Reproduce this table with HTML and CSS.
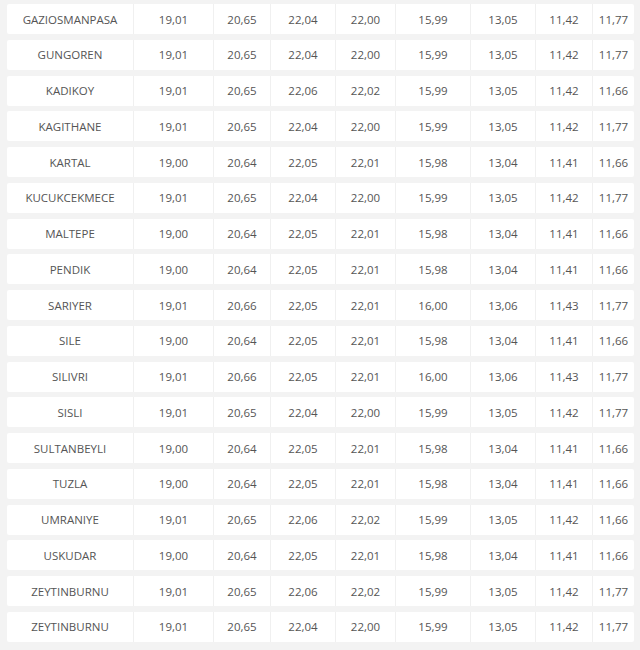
FILE: index.html
```html
<!DOCTYPE html>
<html>
<head>
<meta charset="utf-8">
<link rel="stylesheet" href="styles.css">
</head>
<body>
<div class="table">
<div class="row"><div class="c">GAZIOSMANPASA</div><div class="c">19,01</div><div class="c">20,65</div><div class="c">22,04</div><div class="c">22,00</div><div class="c">15,99</div><div class="c">13,05</div><div class="c">11,42</div><div class="c">11,77</div></div>
<div class="row"><div class="c">GUNGOREN</div><div class="c">19,01</div><div class="c">20,65</div><div class="c">22,04</div><div class="c">22,00</div><div class="c">15,99</div><div class="c">13,05</div><div class="c">11,42</div><div class="c">11,77</div></div>
<div class="row"><div class="c">KADIKOY</div><div class="c">19,01</div><div class="c">20,65</div><div class="c">22,06</div><div class="c">22,02</div><div class="c">15,99</div><div class="c">13,05</div><div class="c">11,42</div><div class="c">11,66</div></div>
<div class="row"><div class="c">KAGITHANE</div><div class="c">19,01</div><div class="c">20,65</div><div class="c">22,04</div><div class="c">22,00</div><div class="c">15,99</div><div class="c">13,05</div><div class="c">11,42</div><div class="c">11,77</div></div>
<div class="row"><div class="c">KARTAL</div><div class="c">19,00</div><div class="c">20,64</div><div class="c">22,05</div><div class="c">22,01</div><div class="c">15,98</div><div class="c">13,04</div><div class="c">11,41</div><div class="c">11,66</div></div>
<div class="row"><div class="c">KUCUKCEKMECE</div><div class="c">19,01</div><div class="c">20,65</div><div class="c">22,04</div><div class="c">22,00</div><div class="c">15,99</div><div class="c">13,05</div><div class="c">11,42</div><div class="c">11,77</div></div>
<div class="row"><div class="c">MALTEPE</div><div class="c">19,00</div><div class="c">20,64</div><div class="c">22,05</div><div class="c">22,01</div><div class="c">15,98</div><div class="c">13,04</div><div class="c">11,41</div><div class="c">11,66</div></div>
<div class="row"><div class="c">PENDIK</div><div class="c">19,00</div><div class="c">20,64</div><div class="c">22,05</div><div class="c">22,01</div><div class="c">15,98</div><div class="c">13,04</div><div class="c">11,41</div><div class="c">11,66</div></div>
<div class="row"><div class="c">SARIYER</div><div class="c">19,01</div><div class="c">20,66</div><div class="c">22,05</div><div class="c">22,01</div><div class="c">16,00</div><div class="c">13,06</div><div class="c">11,43</div><div class="c">11,77</div></div>
<div class="row"><div class="c">SILE</div><div class="c">19,00</div><div class="c">20,64</div><div class="c">22,05</div><div class="c">22,01</div><div class="c">15,98</div><div class="c">13,04</div><div class="c">11,41</div><div class="c">11,66</div></div>
<div class="row"><div class="c">SILIVRI</div><div class="c">19,01</div><div class="c">20,66</div><div class="c">22,05</div><div class="c">22,01</div><div class="c">16,00</div><div class="c">13,06</div><div class="c">11,43</div><div class="c">11,77</div></div>
<div class="row"><div class="c">SISLI</div><div class="c">19,01</div><div class="c">20,65</div><div class="c">22,04</div><div class="c">22,00</div><div class="c">15,99</div><div class="c">13,05</div><div class="c">11,42</div><div class="c">11,77</div></div>
<div class="row"><div class="c">SULTANBEYLI</div><div class="c">19,00</div><div class="c">20,64</div><div class="c">22,05</div><div class="c">22,01</div><div class="c">15,98</div><div class="c">13,04</div><div class="c">11,41</div><div class="c">11,66</div></div>
<div class="row"><div class="c">TUZLA</div><div class="c">19,00</div><div class="c">20,64</div><div class="c">22,05</div><div class="c">22,01</div><div class="c">15,98</div><div class="c">13,04</div><div class="c">11,41</div><div class="c">11,66</div></div>
<div class="row"><div class="c">UMRANIYE</div><div class="c">19,01</div><div class="c">20,65</div><div class="c">22,06</div><div class="c">22,02</div><div class="c">15,99</div><div class="c">13,05</div><div class="c">11,42</div><div class="c">11,66</div></div>
<div class="row"><div class="c">USKUDAR</div><div class="c">19,00</div><div class="c">20,64</div><div class="c">22,05</div><div class="c">22,01</div><div class="c">15,98</div><div class="c">13,04</div><div class="c">11,41</div><div class="c">11,66</div></div>
<div class="row"><div class="c">ZEYTINBURNU</div><div class="c">19,01</div><div class="c">20,65</div><div class="c">22,06</div><div class="c">22,02</div><div class="c">15,99</div><div class="c">13,05</div><div class="c">11,42</div><div class="c">11,77</div></div>
<div class="row"><div class="c">ZEYTINBURNU</div><div class="c">19,01</div><div class="c">20,65</div><div class="c">22,04</div><div class="c">22,00</div><div class="c">15,99</div><div class="c">13,05</div><div class="c">11,42</div><div class="c">11,77</div></div>
</div>
</body>
</html>
```
FILE: styles.css
```css
html, body {
  margin: 0;
  padding: 0;
  background: #f3f3f3;
}
.table {
  display: flex;
  flex-direction: column;
  gap: 5.76px;
  padding: 4px 6px 0 7px;
  font-family: "Open Sans", sans-serif;
  font-size: 11.5px;
  color: #555;
}
.row {
  display: grid;
  grid-template-columns: 126px 80px 57px 65px 60px 75px 65px 57px 42px;
  height: 30px;
  background: #fff;
  border-radius: 2px;
}
.c {
  display: flex;
  align-items: center;
  justify-content: center;
  border-left: 1px solid #f0f0f0;
  white-space: nowrap;
}
.c:first-child {
  border-left: none;
}
```
